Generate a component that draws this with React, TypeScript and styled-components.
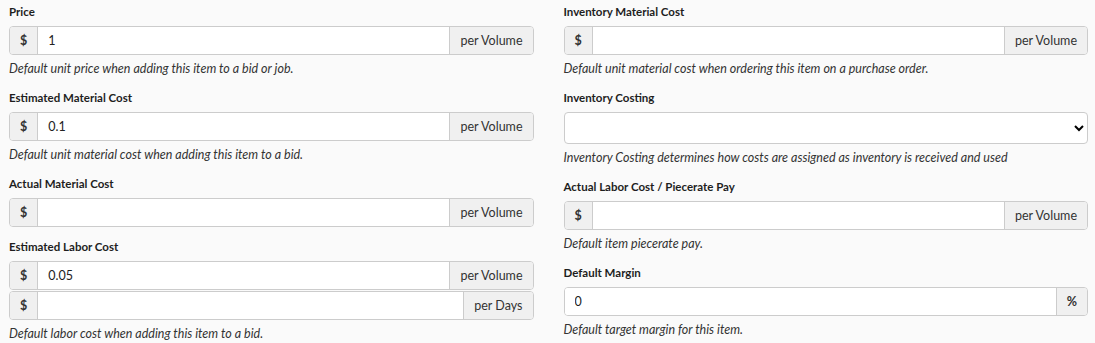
import React from 'react';
import styled, { createGlobalStyle } from 'styled-components';

const GlobalStyle = createGlobalStyle`
    html, body {
        margin: 0;
        padding: 0;
        background: #fafafa;
    }
    body {
        font-family: Lato, "Noto Sans", sans-serif;
        color: #222;
    }
`

const Page = styled.div`
    display: grid;
    grid-template-columns: 1fr 1fr;
    column-gap: 30px;
    padding: 2px 7px 0 9px;
`

const Column = styled.div`
    display: flex;
    flex-direction: column;
`

const Field = styled.div`
    display: flex;
    flex-direction: column;
    margin-bottom: 10px;
`

const Label = styled.label`
    font-size: 11.5px;
    font-weight: 700;
    line-height: 20px;
    margin-bottom: 4px;
    color: #1e1e1e;
`

const Stack = styled.div`
    display: flex;
    flex-direction: column;
    gap: 1px;
`

const Group = styled.div`
    display: flex;
    height: 29px;
    box-sizing: border-box;
    border: 1px solid #ccc;
    border-radius: 4px;
    background: #fff;
    overflow: hidden;
`

const Addon = styled.span<{ side?: 'left' | 'right'; bold?: boolean }>`
    display: flex;
    align-items: center;
    justify-content: center;
    padding: 0 10px;
    background: #f0f0f0;
    font-size: 12.5px;
    font-weight: ${props => (props.bold ? 700 : 400)};
    color: #333;
    border-left: ${props => (props.side === 'right' ? '1px solid #ccc' : 'none')};
    border-right: ${props => (props.side === 'left' ? '1px solid #ccc' : 'none')};
    white-space: nowrap;
`

const Input = styled.input`
    flex: 1;
    min-width: 0;
    border: none;
    outline: none;
    padding: 0 10px;
    font-family: inherit;
    font-size: 12.5px;
    color: #222;
    background: #fff;
`

const Select = styled.select`
    height: 32px;
    box-sizing: border-box;
    border: 1px solid #ccc;
    border-radius: 4px;
    background: #fff;
    font-family: inherit;
    font-size: 12.5px;
    padding: 0 6px;
`

const Help = styled.div`
    font-size: 12.5px;
    font-style: italic;
    line-height: 18px;
    margin-top: 5px;
    color: #333;
`

interface IMoneyField {
    value?: string;
    unit?: string;
}

const MoneyInput = ({ value, unit }: IMoneyField) => (
    <Group>
        <Addon side="left" bold>$</Addon>
        <Input defaultValue={value} />
        {unit && <Addon side="right">{unit}</Addon>}
    </Group>
)

const App = () => {
    return (
        <>
            <GlobalStyle />
            <Page>
                <Column>
                    <Field>
                        <Label>Price</Label>
                        <MoneyInput value="1" unit="per Volume" />
                        <Help>Default unit price when adding this item to a bid or job.</Help>
                    </Field>
                    <Field>
                        <Label>Estimated Material Cost</Label>
                        <MoneyInput value="0.1" unit="per Volume" />
                        <Help>Default unit material cost when adding this item to a bid.</Help>
                    </Field>
                    <Field>
                        <Label>Actual Material Cost</Label>
                        <MoneyInput unit="per Volume" />
                    </Field>
                    <Field>
                        <Label>Estimated Labor Cost</Label>
                        <Stack>
                            <MoneyInput value="0.05" unit="per Volume" />
                            <MoneyInput unit="per Days" />
                        </Stack>
                        <Help>Default labor cost when adding this item to a bid.</Help>
                    </Field>
                </Column>
                <Column>
                    <Field>
                        <Label>Inventory Material Cost</Label>
                        <MoneyInput unit="per Volume" />
                        <Help>Default unit material cost when ordering this item on a purchase order.</Help>
                    </Field>
                    <Field>
                        <Label>Inventory Costing</Label>
                        <Select defaultValue="">
                            <option value=""></option>
                        </Select>
                        <Help>Inventory Costing determines how costs are assigned as inventory is received and used</Help>
                    </Field>
                    <Field>
                        <Label>Actual Labor Cost / Piecerate Pay</Label>
                        <MoneyInput unit="per Volume" />
                        <Help>Default item piecerate pay.</Help>
                    </Field>
                    <Field>
                        <Label>Default Margin</Label>
                        <Group>
                            <Input defaultValue="0" />
                            <Addon side="right" bold>%</Addon>
                        </Group>
                        <Help>Default target margin for this item.</Help>
                    </Field>
                </Column>
            </Page>
        </>
    )
}

export default App;
